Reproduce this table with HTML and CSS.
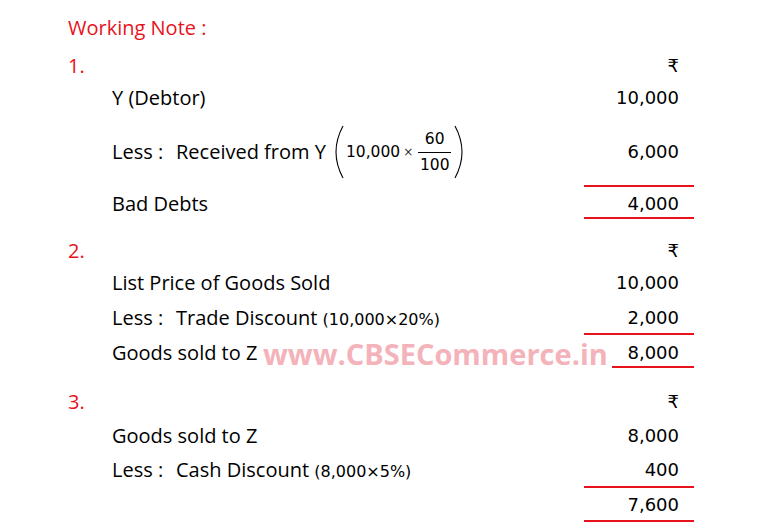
FILE: index.html
```html
<!DOCTYPE html>
<html>
<head>
<meta charset="utf-8">
<link rel="stylesheet" href="styles.css">
</head>
<body>
<div class="page">
  <div class="title">Working Note :</div>

  <section class="sec">
    <div class="row head"><span class="num">1.</span><span class="amt">₹</span></div>
    <div class="row r24"><span class="label">Y (Debtor)</span><span class="amt">10,000</span></div>
    <div class="row rless1">
      <span class="label">
        <span class="less">Less :</span>Received from Y
        <span class="paren-group">
          <svg class="paren" width="10" height="54" viewBox="0 0 10 54"><path d="M8 1 Q1 14 1 27 Q1 40 8 53" fill="none" stroke="#000" stroke-width="1.1"/></svg>
          <span class="mnum">10,000</span><span class="times">×</span>
          <span class="frac"><span class="fnum">60</span><span class="fden">100</span></span>
          <svg class="paren" width="10" height="54" viewBox="0 0 10 54"><path d="M2 1 Q9 14 9 27 Q9 40 2 53" fill="none" stroke="#000" stroke-width="1.1"/></svg>
        </span>
      </span>
      <span class="amt">6,000</span>
    </div>
    <div class="row total t1"><span class="label">Bad Debts</span><span class="amt">4,000</span></div>
  </section>

  <section class="sec s2">
    <div class="row head36"><span class="num">2.</span><span class="amt">₹</span></div>
    <div class="row r28"><span class="label">List Price of Goods Sold</span><span class="amt">10,000</span></div>
    <div class="row rless2"><span class="label"><span class="less">Less :</span>Trade Discount <span class="calc">(10,000×20%)</span></span><span class="amt under">2,000</span></div>
    <div class="row total t2">
      <span class="label">Goods sold to Z</span><span class="amt">8,000</span>
      <span class="watermark">www.CBSECommerce.in</span>
    </div>
  </section>

  <section class="sec s3">
    <div class="row head36"><span class="num">3.</span><span class="amt">₹</span></div>
    <div class="row r32"><span class="label">Goods sold to Z</span><span class="amt">8,000</span></div>
    <div class="row rless3"><span class="label"><span class="less">Less :</span>Cash Discount <span class="calc">(8,000×5%)</span></span><span class="amt">400</span></div>
    <div class="row total t3"><span class="label"></span><span class="amt">7,600</span></div>
  </section>
</div>
</body>
</html>
```

FILE: styles.css
```css
html, body {
  margin: 0;
  padding: 0;
  background: #fff;
}

body {
  font-family: "Open Sans", "DejaVu Sans", sans-serif;
  color: #000;
}

.page {
  padding: 10px 0 0 68px;
  width: 626px;
}

.title {
  height: 36px;
  line-height: 36px;
  color: #e8121c;
  font-size: 20px;
}

.row {
  display: flex;
  justify-content: space-between;
  align-items: flex-start;
  position: relative;
  box-sizing: border-box;
}

.num {
  color: #e8121c;
  font-size: 20px;
}

.label {
  padding-left: 44px;
  font-size: 20px;
  white-space: nowrap;
}

.less {
  display: inline-block;
  width: 64px;
}

.amt {
  width: 110px;
  box-sizing: border-box;
  padding-right: 15px;
  text-align: right;
  font-family: "DejaVu Sans", sans-serif;
  font-size: 18px;
}

.head { height: 40px; line-height: 40px; }
.head36 { height: 36px; line-height: 36px; }
.r24 { height: 24px; line-height: 24px; }
.r28 { height: 28px; line-height: 28px; }
.r32 { height: 32px; line-height: 32px; }

.rless1 {
  height: 75px;
  padding-top: 18px;
  line-height: 48px;
}

.rless1 .label {
  display: flex;
  align-items: center;
  height: 48px;
}

.paren-group {
  display: inline-flex;
  align-items: center;
  margin-left: 9px;
  font-family: "DejaVu Sans", sans-serif;
  font-size: 15.5px;
}

.paren { display: block; }

.mnum { margin-left: 1px; }

.times {
  font-size: 12px;
  color: #333;
  margin: 0 5px 0 3px;
}

.frac {
  display: inline-flex;
  flex-direction: column;
  align-items: center;
  line-height: 25px;
  margin-right: 2px;
}

.fnum {
  border-bottom: 1px solid #000;
  padding: 0 1px;
  width: 31px;
  text-align: center;
}

.calc {
  font-family: "DejaVu Sans", sans-serif;
  font-size: 16px;
}

.rless2 {
  height: 36px;
  padding-top: 6px;
  line-height: 30px;
}

.rless3 {
  height: 34px;
  padding-top: 2px;
  line-height: 32px;
}

.total .amt {
  border-top: 2px solid #e8121c;
  border-bottom: 2px solid #e8121c;
}

.t1 .label { padding-top: 6px; line-height: 26px; }
.t1 .amt { height: 34px; padding-top: 4px; line-height: 26px; }

.t2 .label { padding-top: 6px; line-height: 27px; }
.t2 .amt { height: 35px; padding-top: 4px; line-height: 27px; }

.t3 .amt { height: 36px; padding-top: 1px; line-height: 31px; }

.s2 { margin-top: 14px; }
.s3 { margin-top: 16px; }

.watermark {
  position: absolute;
  left: 195px;
  top: 5px;
  height: 32px;
  line-height: 32px;
  padding-right: 4px;
  background: #fff;
  font-family: "Open Sans", sans-serif;
  font-weight: 700;
  font-size: 29px;
  color: #f4b3ba;
  white-space: nowrap;
}
```
